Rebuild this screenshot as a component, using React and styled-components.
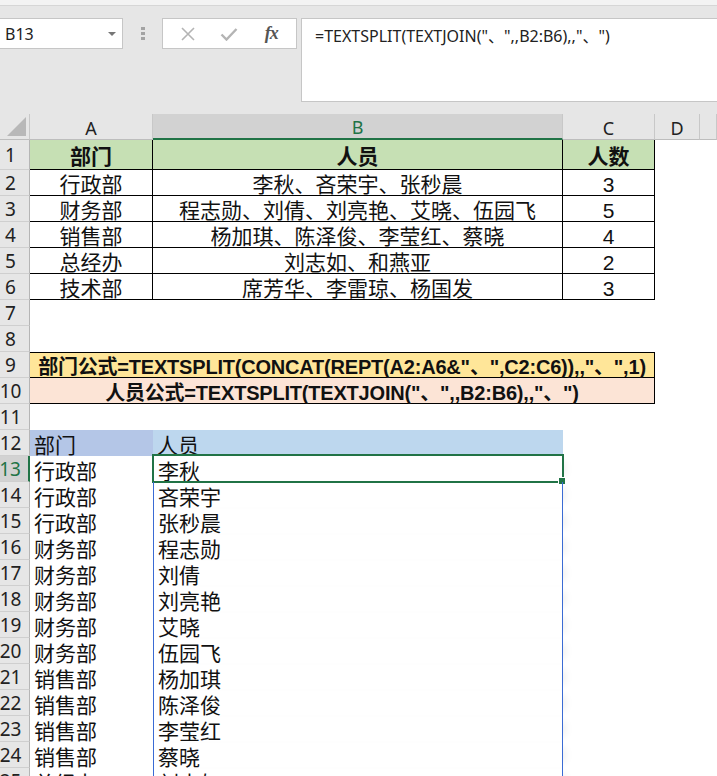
import styled, { createGlobalStyle } from "styled-components";

const GlobalStyle = createGlobalStyle`
  html, body {
    margin: 0;
    padding: 0;
    background: #ffffff;
    overflow: hidden;
  }
`;

const CJK = `"Liberation Sans", "Noto Sans CJK SC", sans-serif`;
const UI = `"Noto Sans", "Noto Sans CJK SC", sans-serif`;
const GRID_COLS = "30px 123px 410px 92px 45px 1fr";

const green = "#217346";

const Window = styled.div`
  width: 717px;
  height: 776px;
  overflow: hidden;
  background: #fff;
`;

const FormulaArea = styled.div`
  height: 114px;
  background: #e6e6e6;
  border-top: 5px solid #f3f3f3;
  box-shadow: inset 0 1px 0 #d6d6d6;
  box-sizing: border-box;
  padding-top: 13px;
`;

const BarRow = styled.div`
  display: flex;
  align-items: flex-start;
`;

const NameBox = styled.div`
  width: 123px;
  height: 31px;
  box-sizing: border-box;
  background: #fff;
  border: 1px solid #c6c6c6;
  border-left: none;
  display: flex;
  align-items: center;
  justify-content: space-between;
  padding: 0 6px 0 5px;
  font-family: ${UI};
  font-size: 16px;
  color: #222;
`;

const Caret = styled.span`
  width: 0;
  height: 0;
  border-left: 4px solid transparent;
  border-right: 4px solid transparent;
  border-top: 4px solid #767676;
`;

const Grip = styled.div`
  width: 39px;
  height: 31px;
  display: flex;
  flex-direction: column;
  align-items: center;
  justify-content: center;
  gap: 2px;
`;

const GripDot = styled.span`
  display: block;
  width: 4px;
  height: 3px;
  background: #a3a3a3;
`;

const ButtonGroup = styled.div`
  width: 135px;
  height: 31px;
  box-sizing: border-box;
  background: #fff;
  border: 1px solid #c6c6c6;
  display: flex;
  align-items: center;
  justify-content: space-around;
  padding: 0 4px;
`;

const IconBtn = styled.span`
  width: 30px;
  display: flex;
  justify-content: center;
  align-items: center;
`;

const Fx = styled.span`
  font-family: "Liberation Serif", serif;
  font-style: italic;
  font-weight: bold;
  font-size: 18px;
  color: #555;
  letter-spacing: -1px;
`;

const FormulaBox = styled.div`
  flex: 1;
  margin-left: 4px;
  height: 84px;
  box-sizing: border-box;
  background: #fff;
  border: 1px solid #c6c6c6;
  border-right: none;
  padding: 4px 0 0 13px;
  font-family: ${UI};
  font-size: 16px;
  color: #222;
`;

const Sheet = styled.div`
  display: flex;
  flex-direction: column;
`;

const SheetRow = styled.div`
  display: grid;
  grid-template-columns: ${GRID_COLS};
  height: ${(p) => p.$h}px;
  flex-shrink: 0;
  min-height: 0;
`;

const Corner = styled.div`
  background: #e6e6e6;
  border-right: 1px solid #c8c8c8;
  border-bottom: 1px solid #bdbdbd;
  position: relative;

  &::after {
    content: "";
    position: absolute;
    right: 3px;
    bottom: 3px;
    border-left: 19px solid transparent;
    border-bottom: 19px solid #b8b8b8;
  }
`;

const ColHead = styled.div`
  background: ${(p) => (p.$active ? "#d2d2d2" : "#e6e6e6")};
  border-right: 1px solid #c8c8c8;
  border-bottom: ${(p) => (p.$active ? `2px solid ${green}` : "1px solid #bdbdbd")};
  display: flex;
  align-items: center;
  justify-content: center;
  padding-top: 2px;
  box-sizing: border-box;
  font-family: ${UI};
  font-size: 18px;
  line-height: 1;
  color: ${(p) => (p.$active ? green : "#222")};
`;

const RowHead = styled.div`
  background: ${(p) => (p.$active ? "#d2d2d2" : "#e6e6e6")};
  border-right: ${(p) => (p.$active ? `2px solid ${green}` : "1px solid #b5b5b5")};
  border-bottom: 1px solid #cfcfcf;
  box-sizing: border-box;
  display: flex;
  align-items: center;
  justify-content: center;
  padding: 2px 8px 0 0;
  font-family: ${UI};
  font-size: 19px;
  line-height: 1;
  color: ${(p) => (p.$active ? green : "#222")};
  white-space: nowrap;
  overflow: visible;
  min-height: 0;
`;

const Cell = styled.div`
  grid-column: span ${(p) => p.$span || 1};
  background: ${(p) => p.$bg || "transparent"};
  box-sizing: border-box;
  min-height: 0;
  display: flex;
  align-items: center;
  justify-content: ${(p) => (p.$center ? "center" : "flex-start")};
  padding: 4px 0 0 ${(p) => (p.$center ? 0 : 4)}px;
  font-family: ${CJK};
  font-size: ${(p) => (p.$formula ? 20 : 21)}px;
  letter-spacing: ${(p) => (p.$formula ? "-0.2px" : "0")};
  line-height: 1;
  font-weight: ${(p) => (p.$bold ? 700 : 400)};
  color: #111;
  white-space: nowrap;
  position: relative;
  ${(p) => p.$boxed && "border-right: 1px solid #000; border-bottom: 1px solid #000;"}
  ${(p) => p.$top && "border-top: 1px solid #000;"}
  ${(p) =>
    p.$spill &&
    `border-left: 1px solid #3a6bd4;
     border-right: 1px solid #3a6bd4;
     box-shadow: 8px 0 8px -6px rgba(0, 0, 0, 0.08);`}
`;

const Selection = styled.div`
  position: absolute;
  inset: -2px -2px -1px -2px;
  border: 2px solid ${green};
  pointer-events: none;

  &::after {
    content: "";
    position: absolute;
    right: -4px;
    bottom: -4px;
    width: 6px;
    height: 6px;
    background: ${green};
    border: 1px solid #fff;
  }
`;

const colLetters = ["A", "B", "C", "D", ""];

const table = [
  ["行政部", "李秋、吝荣宇、张秒晨", "3"],
  ["财务部", "程志勋、刘倩、刘亮艳、艾晓、伍园飞", "5"],
  ["销售部", "杨加琪、陈泽俊、李莹红、蔡晓", "4"],
  ["总经办", "刘志如、和燕亚", "2"],
  ["技术部", "席芳华、李雷琼、杨国发", "3"],
];

const spill = [
  ["行政部", "李秋"],
  ["行政部", "吝荣宇"],
  ["行政部", "张秒晨"],
  ["财务部", "程志勋"],
  ["财务部", "刘倩"],
  ["财务部", "刘亮艳"],
  ["财务部", "艾晓"],
  ["财务部", "伍园飞"],
  ["销售部", "杨加琪"],
  ["销售部", "陈泽俊"],
  ["销售部", "李莹红"],
  ["销售部", "蔡晓"],
  ["总经办", "刘志如"],
];

const CrossIcon = () => (
  <svg width="16" height="14" viewBox="0 0 16 14">
    <path d="M2 1 L14 13 M14 1 L2 13" stroke="#b4b4b4" strokeWidth="1.6" fill="none" />
  </svg>
);

const CheckIcon = () => (
  <svg width="18" height="14" viewBox="0 0 18 14">
    <path d="M1.5 7.5 L6.5 12.5 L16.5 2" stroke="#b4b4b4" strokeWidth="2.4" fill="none" />
  </svg>
);

export default function App() {
  return (
    <Window>
      <GlobalStyle />
      <FormulaArea>
        <BarRow>
          <NameBox>
            B13
            <Caret />
          </NameBox>
          <Grip>
            <GripDot />
            <GripDot />
            <GripDot />
          </Grip>
          <ButtonGroup>
            <IconBtn>
              <CrossIcon />
            </IconBtn>
            <IconBtn>
              <CheckIcon />
            </IconBtn>
            <IconBtn>
              <Fx>fx</Fx>
            </IconBtn>
          </ButtonGroup>
          <FormulaBox>=TEXTSPLIT(TEXTJOIN("、",,B2:B6),,"、")</FormulaBox>
        </BarRow>
      </FormulaArea>

      <Sheet>
        <SheetRow $h={26}>
          <Corner />
          {colLetters.map((c) => (
            <ColHead key={c || "E"} $active={c === "B"}>
              {c}
            </ColHead>
          ))}
        </SheetRow>

        <SheetRow $h={30}>
          <RowHead>1</RowHead>
          <Cell $boxed $center $bold $bg="#c6e0b4">部门</Cell>
          <Cell $boxed $center $bold $bg="#c6e0b4">人员</Cell>
          <Cell $boxed $center $bold $bg="#c6e0b4">人数</Cell>
          <Cell />
          <Cell />
        </SheetRow>

        {table.map((r, i) => (
          <SheetRow $h={26} key={r[0]}>
            <RowHead>{i + 2}</RowHead>
            <Cell $boxed $center>{r[0]}</Cell>
            <Cell $boxed $center>{r[1]}</Cell>
            <Cell $boxed $center>{r[2]}</Cell>
            <Cell />
            <Cell />
          </SheetRow>
        ))}

        {[7, 8].map((n) => (
          <SheetRow $h={26} key={n}>
            <RowHead>{n}</RowHead>
          </SheetRow>
        ))}

        <SheetRow $h={26}>
          <RowHead>9</RowHead>
          <Cell $span={3} $boxed $top $center $bold $formula $bg="#ffe699">
            部门公式=TEXTSPLIT(CONCAT(REPT(A2:A6&"、",C2:C6)),,"、",1)
          </Cell>
        </SheetRow>
        <SheetRow $h={26}>
          <RowHead>10</RowHead>
          <Cell $span={3} $boxed $center $bold $formula $bg="#fce4d6">
            人员公式=TEXTSPLIT(TEXTJOIN("、",,B2:B6),,"、")
          </Cell>
        </SheetRow>
        <SheetRow $h={26}>
          <RowHead>11</RowHead>
        </SheetRow>
        <SheetRow $h={26}>
          <RowHead>12</RowHead>
          <Cell $bg="#b4c6e7">部门</Cell>
          <Cell $bg="#bdd7ee">人员</Cell>
        </SheetRow>

        {spill.map((r, i) => (
          <SheetRow $h={26} key={i}>
            <RowHead $active={i === 0}>{i + 13}</RowHead>
            <Cell>{r[0]}</Cell>
            <Cell $spill>
              {r[1]}
              {i === 0 && <Selection />}
            </Cell>
            <Cell />
          </SheetRow>
        ))}
      </Sheet>
    </Window>
  );
}
